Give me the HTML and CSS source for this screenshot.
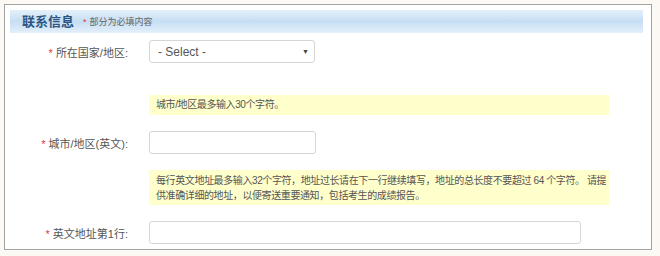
FILE: index.html
```html
<!DOCTYPE html>
<html lang="zh-CN">
<head>
  <meta charset="UTF-8">
  <title>联系信息</title>
  <link rel="stylesheet" href="styles.css">
</head>
<body>

<div class="panel">
  <div class="panel-head">
    <h3>联系信息</h3>
    <span class="note"><em>*</em>部分为必填内容</span>
  </div>

  <div class="row first">
    <label><em>*</em>所在国家/地区:</label>
    <div class="select">
      <span>- Select -</span>
      <span class="arrow">&#9660;</span>
    </div>
  </div>

  <div class="hint one">城市/地区最多输入30个字符。</div>

  <div class="row">
    <label><em>*</em>城市/地区(英文):</label>
    <input type="text" class="short">
  </div>

  <div class="hint">每行英文地址最多输入32个字符，地址过长请在下一行继续填写，地址的总长度不要超过 64 个字符。 请提供准确详细的地址，以便寄送重要通知，包括考生的成绩报告。</div>

  <div class="row">
    <label><em>*</em>英文地址第1行:</label>
    <input type="text" class="long">
  </div>
</div>

</body>
</html>
```

FILE: styles.css
```css
body {
  margin: 0;
  padding: 4px 0 0 4px;
  background: #fcf9f4;
  font-family: "Liberation Sans", "Noto Sans CJK SC", sans-serif;
  color: #555;
}
.panel {
  width: 633px;
  background: #fff;
  border: 1px solid #a3a3a3;
  padding: 5px 8px 5px 5px;
}
.panel-head {
  height: 23px;
  display: flex;
  align-items: center;
  padding-left: 12px;
  background: linear-gradient(#e4f0fa, #c6def3 50%, #e4f0fa);
}
.panel-head h3 {
  margin: 0;
  font-size: 13px;
  font-weight: bold;
  color: #2b5584;
  line-height: 16px;
}
.note {
  margin-left: 9px;
  font-size: 9px;
  color: #666;
}
em {
  font-style: normal;
  color: #e0393e;
  margin-right: 3px;
}
.row {
  display: grid;
  grid-template-columns: 139px auto;
  align-items: center;
  margin-top: 16px;
}
.row.first {
  margin-top: 7px;
}
.row:last-child {
  margin-top: 16px;
}
.row label {
  text-align: right;
  padding-right: 21px;
  font-size: 11px;
  color: #555;
}
.select, input {
  box-sizing: border-box;
  height: 23px;
  border: 1px solid #d6d6d6;
  border-radius: 3px;
  background: #fff;
}
.select {
  width: 166px;
  display: flex;
  align-items: center;
  justify-content: space-between;
  padding: 0 5px 0 8px;
  font-size: 12px;
  color: #555;
}
.arrow {
  font-size: 7px;
  color: #444;
}
input {
  margin: 0;
  padding: 0 6px;
}
input.short {
  width: 167px;
}
input.long {
  width: 432px;
}
.hint {
  margin: 16px 0 0 139px;
  width: 460px;
  box-sizing: border-box;
  background: #ffffcc;
  padding: 3px 2px 2px 7px;
  font-size: 10px;
  line-height: 15px;
  letter-spacing: -0.4px;
  color: #555;
}
.hint.one {
  margin-top: 32px;
  padding: 2px 7px 3px 7px;
}
```
